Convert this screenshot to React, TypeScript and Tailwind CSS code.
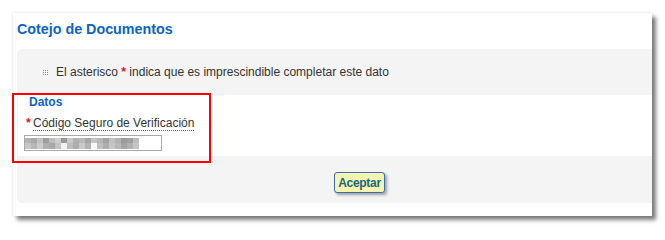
import React from "react";

const mosaicTop = [
  "bg-[#b4b4b4]", "bg-[#a9a9a9]", "bg-[#c2c2c2]", "bg-[#9e9e9e]", "bg-[#bdbdbd]", "bg-[#cfcfcf]",
  "bg-[#999999]", "bg-[#c8c8c8]", "bg-[#b0b0b0]", "bg-[#bababa]", "bg-[#a6a6a6]", "bg-[#c4c4c4]",
  "bg-[#b8b8b8]", "bg-[#a3a3a3]", "bg-[#c0c0c0]", "bg-[#b2b2b2]", "bg-[#9c9c9c]", "bg-[#a0a0a0]",
  "bg-[#bcbcbc]", "bg-[#ffffff]",
];

const mosaicBottom = [
  "bg-[#c6c6c6]", "bg-[#b6b6b6]", "bg-[#cccccc]", "bg-[#b0b0b0]", "bg-[#a8a8a8]", "bg-[#c3c3c3]",
  "bg-[#f2f2f2]", "bg-[#bdbdbd]", "bg-[#adadad]", "bg-[#c9c9c9]", "bg-[#b3b3b3]", "bg-[#f7f7f7]",
  "bg-[#bfbfbf]", "bg-[#aeaeae]", "bg-[#c7c7c7]", "bg-[#b9b9b9]", "bg-[#a4a4a4]", "bg-[#b1b1b1]",
  "bg-[#c5c5c5]", "bg-[#ffffff]",
];

function DotBullet() {
  return (
    <span className="grid grid-cols-3 gap-[1px] w-[5px] h-[5px] shrink-0">
      {Array.from({ length: 9 }).map((_, i) => (
        <span key={i} className="w-[1px] h-[1px] bg-[#8a8a8a]" />
      ))}
    </span>
  );
}

function MaskedValue() {
  return (
    <div className="flex flex-col">
      <div className="flex">
        {mosaicTop.map((c, i) => (
          <span key={i} className={`w-[6px] h-[5px] ${c}`} />
        ))}
      </div>
      <div className="flex">
        {mosaicBottom.map((c, i) => (
          <span key={i} className={`w-[6px] h-[6px] ${c}`} />
        ))}
      </div>
    </div>
  );
}

export default function App() {
  return (
    <div className="relative w-[665px] h-[229px] bg-white font-['Liberation_Sans',Arial,sans-serif] text-[#333333] overflow-hidden">
      <div className="ml-[13px] mt-[13px] w-[639px] h-[203px] bg-white pl-[4px] pb-[13px] flex flex-col shadow-[4px_4px_4px_rgba(0,0,0,0.5),0_0_3px_rgba(0,0,0,0.12)]">
        <h1 className="pt-[8px] mb-[12px] text-[14.3px] leading-[16px] font-bold text-[#0a64c8]">
          Cotejo de Documentos
        </h1>

        <div className="flex-1 flex flex-col bg-[#f4f4f4] rounded-l-[5px]">
          <div className="h-[46px] flex items-center pl-[26px] gap-[8px] text-[12px]">
            <DotBullet />
            <p>
              El asterisco <span className="text-[#e8101a] font-bold">*</span> indica que es
              imprescindible completar este dato
            </p>
          </div>

          <div className="h-[61px] bg-white ml-[1px] pl-[6px] flex flex-col">
            <h2 className="pl-[5px] text-[12px] leading-[14px] font-bold text-[#0a64c8]">Datos</h2>
            <div className="mt-[7px] flex items-start pl-[2px] text-[12px] leading-[14px]">
              <span className="text-[#e8101a] font-bold w-[7px]">*</span>
              <label className="border-b border-dotted border-[#666666] text-[#333333]">
                Código Seguro de Verificación
              </label>
            </div>
            <div className="mt-[4px] w-[138px] h-[16px] border border-[#a9a9a9] bg-white flex items-center px-[0px]">
              <MaskedValue />
            </div>
          </div>

          <div className="h-[47px] flex justify-center items-start pl-[50px] pt-[16px]">
            <button className="w-[51px] h-[21px] bg-[#f7f3b0] border border-[#3a6fb5] rounded-[3px] text-[12px] font-bold tracking-tight text-[#17697b] shadow-[2px_2px_3px_rgba(0,0,0,0.35)]">
              Aceptar
            </button>
          </div>
        </div>
      </div>

      <div className="absolute left-[12px] top-[93px] w-[199px] h-[70px] border-2 border-[#ff0000] pointer-events-none" />
    </div>
  );
}
